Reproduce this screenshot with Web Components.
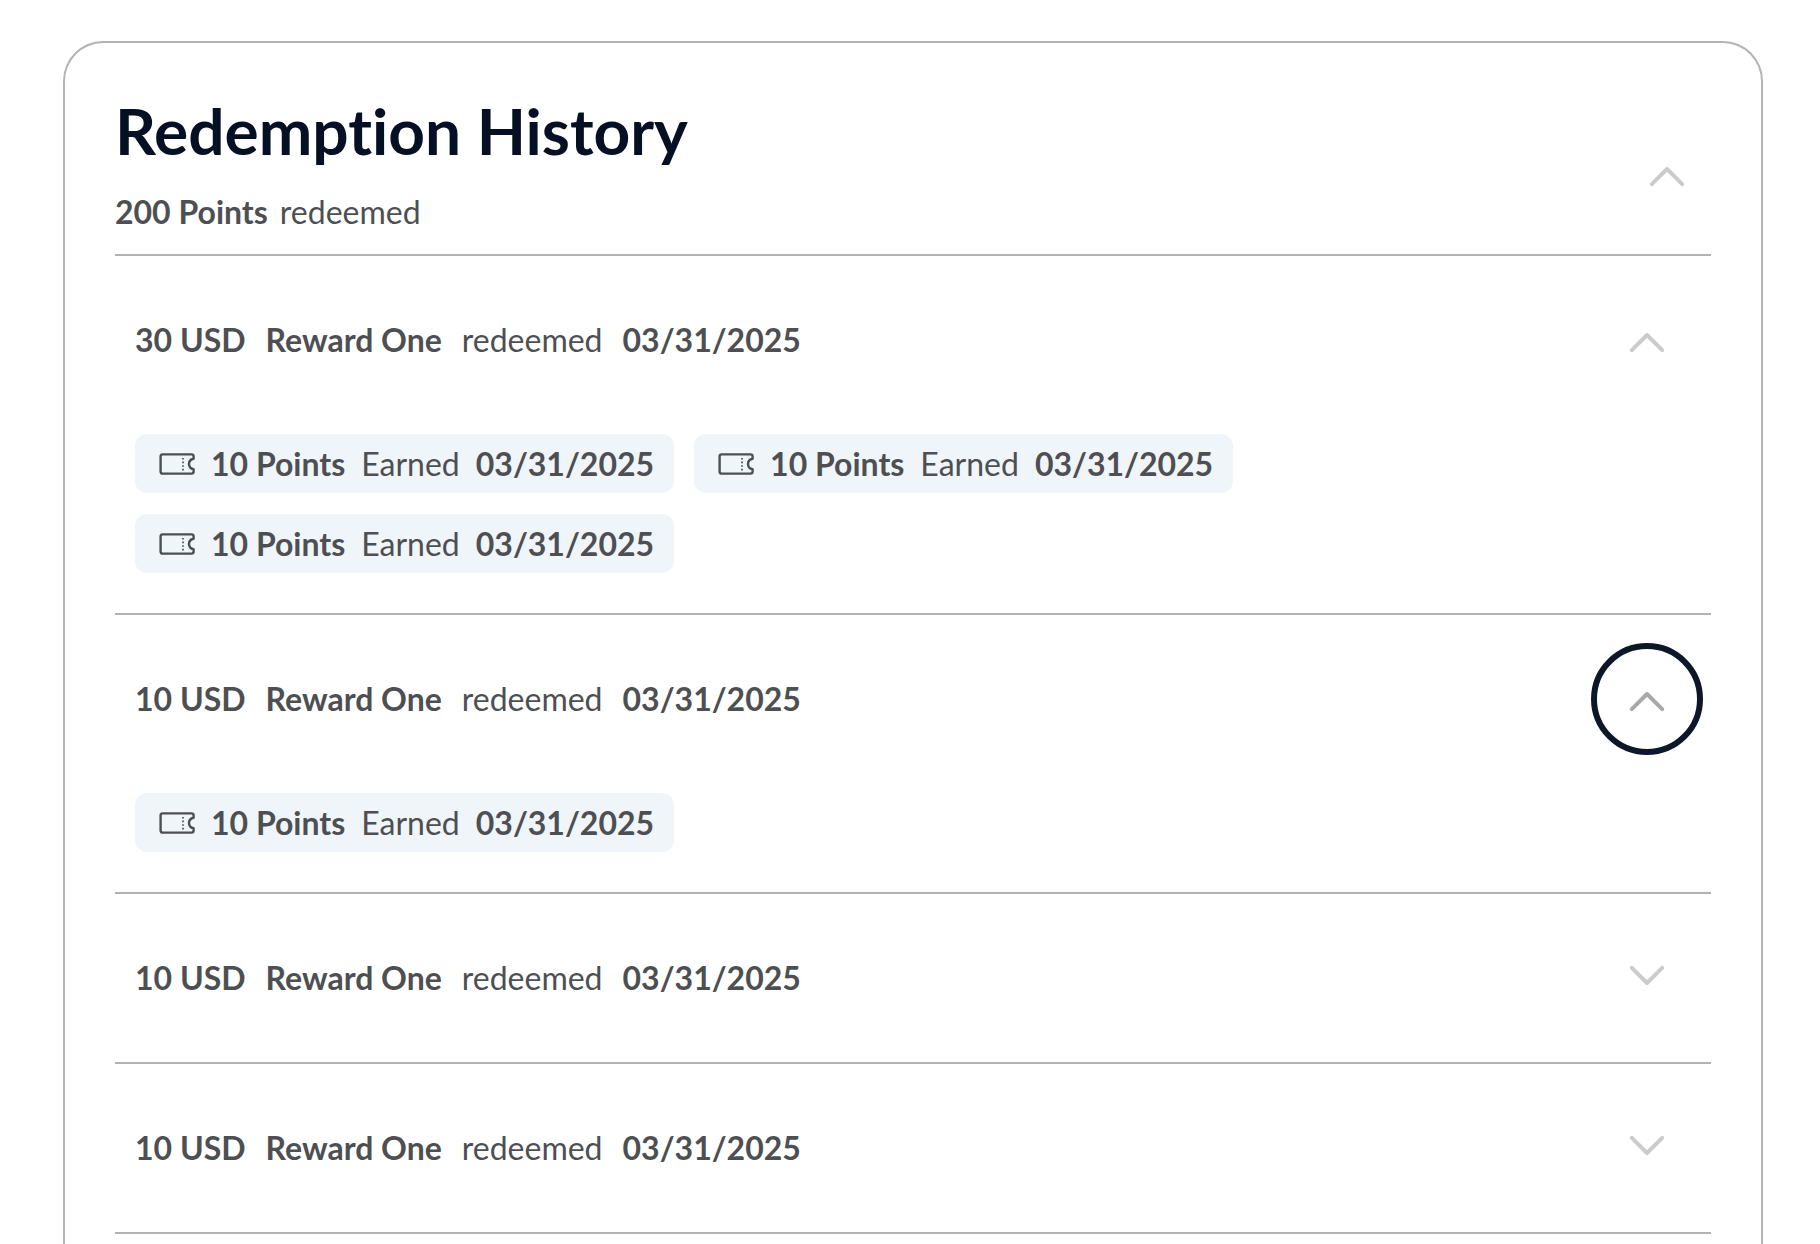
<!DOCTYPE html>
<html lang="en">
<head>
<meta charset="utf-8">
<meta name="viewport" content="width=device-width, initial-scale=1">
<title>Redemption History</title>
<style>
  body {
    margin: 0;
    background: #fff;
    color: #4d4f53;
    font: 400 32px/38px Lato, sans-serif;
    font-variant-ligatures: none;
    --line: #b3b3b3;
    --ink: #061024;
    --chip: #f0f5fa;
  }
</style>
</head>
<body>
<history-page>
  <history-card heading="Redemption History">
    <span slot="summary"><b>200 Points</b></span>
    <span slot="summary">redeemed</span>
    <redemption-item amount="30 USD" reward="Reward One" date="03/31/2025" open>
      <points-chip points="10 Points" date="03/31/2025"></points-chip>
      <points-chip points="10 Points" date="03/31/2025"></points-chip>
      <points-chip points="10 Points" date="03/31/2025"></points-chip>
    </redemption-item>
    <redemption-item amount="10 USD" reward="Reward One" date="03/31/2025" open active>
      <points-chip points="10 Points" date="03/31/2025"></points-chip>
    </redemption-item>
    <redemption-item amount="10 USD" reward="Reward One" date="03/31/2025">
      <points-chip points="10 Points" date="03/31/2025"></points-chip>
    </redemption-item>
    <redemption-item amount="10 USD" reward="Reward One" date="03/31/2025">
      <points-chip points="10 Points" date="03/31/2025"></points-chip>
    </redemption-item>
  </history-card>
</history-page>

<script>
  customElements.define('history-page', class extends HTMLElement {
    constructor() {
      super();
      this.attachShadow({ mode: 'open' }).innerHTML = `
        <style>
          :host { display: block; }
          main {
            box-sizing: border-box;
            min-height: 100vh;
            padding: 41px 57px 0 63px;
            display: flex;
            flex-direction: column;
          }
          ::slotted(*) { flex: 1; }
        </style>
        <main><slot></slot></main>`;
    }
  });

  // Round chevron button; reports its state through the host's "open" attribute.
  customElements.define('toggle-button', class extends HTMLElement {
    static observedAttributes = ['open', 'label'];
    constructor() {
      super();
      this.attachShadow({ mode: 'open' }).innerHTML = `
        <style>
          :host { display: block; flex: none; --size: 112px; }
          :host([compact]) { --size: 88px; }
          button {
            box-sizing: border-box;
            width: var(--size);
            height: var(--size);
            display: flex;
            align-items: center;
            justify-content: center;
            padding: 0;
            border: 6px solid transparent;
            border-radius: 50%;
            background: none;
            color: #cbcbcb;
            outline: none;
            cursor: pointer;
          }
          :host([active]) button, button:focus-visible { border-color: #0d172a; color: #a9a9a9; }
          svg { display: block; width: 48px; height: 48px; transform: rotate(180deg); }
          :host([open]) svg { transform: none; }
        </style>
        <button type="button">
          <svg viewBox="0 0 48 48" fill="none" stroke="currentColor" stroke-width="4"
               stroke-linecap="round" stroke-linejoin="round" aria-hidden="true">
            <path d="M8.8 34.2 24 19l15.2 15.2"/>
          </svg>
        </button>`;
    }
    attributeChangedCallback() {
      const button = this.shadowRoot.querySelector('button');
      button.setAttribute('aria-expanded', this.hasAttribute('open'));
      button.setAttribute('aria-label', this.getAttribute('label') || 'Toggle');
    }
  });

  customElements.define('history-card', class extends HTMLElement {
    constructor() {
      super();
      this.attachShadow({ mode: 'open' }).innerHTML = `
        <style>
          :host {
            display: block;
            border: 2px solid var(--line);
            border-bottom: 0;
            border-radius: 40px 40px 0 0;
            padding: 50px 50px 0;
          }
          header {
            display: flex;
            align-items: center;
            justify-content: space-between;
            padding-bottom: 23px;
            border-bottom: 2px solid var(--line);
          }
          toggle-button { margin-bottom: -23px; }
          .titles { display: grid; gap: 24px; }
          h1 { margin: 0; font-size: 64px; line-height: 76px; font-weight: 700; color: var(--ink); }
          .summary { display: flex; gap: 12px; }
          .items[hidden] { display: none; }
        </style>
        <header>
          <div class="titles">
            <h1></h1>
            <div class="summary"><slot name="summary"></slot></div>
          </div>
          <toggle-button compact open label="Toggle redemption history"></toggle-button>
        </header>
        <div class="items"><slot></slot></div>`;
      const toggle = this.shadowRoot.querySelector('toggle-button');
      toggle.addEventListener('click', () => {
        this.shadowRoot.querySelector('.items').hidden = !toggle.toggleAttribute('open');
      });
    }
    connectedCallback() {
      this.shadowRoot.querySelector('h1').textContent = this.getAttribute('heading');
    }
  });

  customElements.define('redemption-item', class extends HTMLElement {
    static observedAttributes = ['open', 'active'];
    constructor() {
      super();
      this.attachShadow({ mode: 'open' }).innerHTML = `
        <style>
          :host { display: block; border-bottom: 2px solid var(--line); }
          .row {
            display: flex;
            align-items: center;
            justify-content: space-between;
            padding: 28px 8px 28px 20px;
          }
          .text { display: flex; gap: 20px; }
          .chips { display: none; padding: 10px 20px 40px; flex-wrap: wrap; gap: 21px 20px; }
          :host([open]) .chips { display: flex; }
        </style>
        <div class="row">
          <div class="text">
            <b class="amount"></b>
            <b class="reward"></b>
            <span>redeemed</span>
            <b class="date"></b>
          </div>
          <toggle-button label="Toggle reward details"></toggle-button>
        </div>
        <div class="chips"><slot></slot></div>`;
      this.shadowRoot.querySelector('toggle-button')
        .addEventListener('click', () => this.toggleAttribute('open'));
    }
    connectedCallback() {
      for (const name of ['amount', 'reward', 'date']) {
        this.shadowRoot.querySelector('.' + name).textContent = this.getAttribute(name);
      }
    }
    attributeChangedCallback(name) {
      this.shadowRoot.querySelector('toggle-button').toggleAttribute(name, this.hasAttribute(name));
    }
  });

  customElements.define('points-chip', class extends HTMLElement {
    constructor() {
      super();
      this.attachShadow({ mode: 'open' }).innerHTML = `
        <style>
          :host {
            box-sizing: border-box;
            height: 59px;
            display: flex;
            align-items: center;
            gap: 16px;
            padding: 0 20px 0 24px;
            border-radius: 12px;
            background: var(--chip);
          }
          svg { display: block; flex: none; width: 36px; height: 22px; }
        </style>
        <svg viewBox="0 0 36 22" fill="none" stroke="currentColor" stroke-width="2.4" stroke-linejoin="round" aria-hidden="true">
          <path d="M3.600 1.400H32.600Q34.600 1.400 34.600 3.400V5.700C31.500 6.300 30 8.300 30 11S31.500 15.700 34.600 16.300V18.600Q34.600 20.600 32.600 20.600H3.600Q1.600 20.600 1.600 18.600V3.400Q1.600 1.400 3.600 1.400Z"/>
          <path d="M24 5V17.600" stroke-width="1.700" stroke-dasharray="1.600 2"/>
        </svg>
        <b class="points"></b>
        <span>Earned</span>
        <b class="date"></b>`;
    }
    connectedCallback() {
      this.shadowRoot.querySelector('.points').textContent = this.getAttribute('points');
      this.shadowRoot.querySelector('.date').textContent = this.getAttribute('date');
    }
  });
</script>
</body>
</html>
